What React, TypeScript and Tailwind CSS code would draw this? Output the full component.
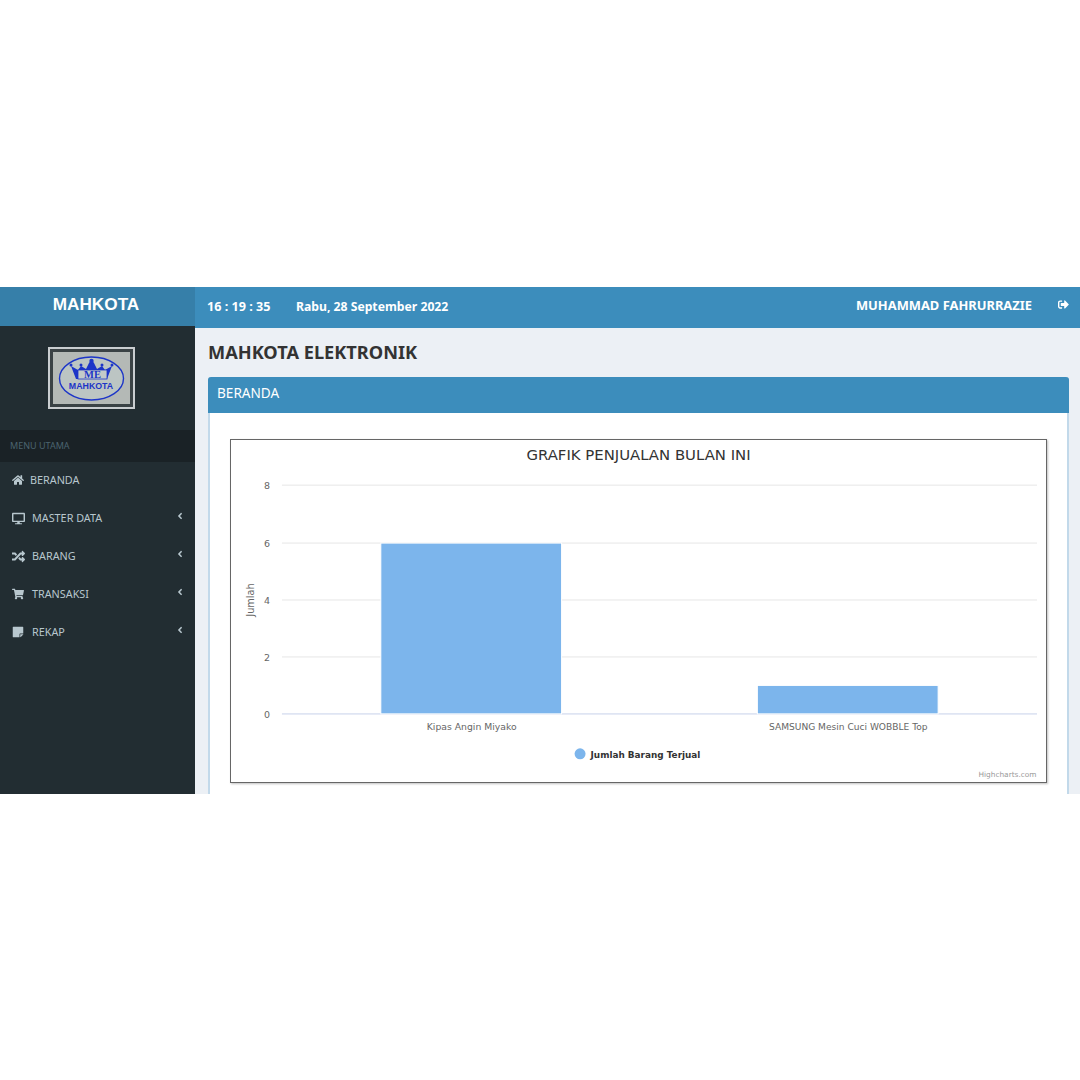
import React from "react";
import { FaHome, FaDesktop, FaRandom, FaShoppingCart, FaStickyNote, FaAngleLeft, FaSignOutAlt } from "react-icons/fa";

const sans = "font-['Noto_Sans','Open_Sans',sans-serif]";

function Logo() {
  return (
    <div className="w-[87px] h-[62px] border-2 border-[#c9cdd0] bg-[#3a4245] p-[3px]">
      <svg viewBox="0 0 77 52" className="w-full h-full block bg-[#b4b9b6]">
        <ellipse cx="38.5" cy="26.5" rx="32" ry="21.5" fill="#bcc5c3" stroke="#1c35c8" strokeWidth="1.4" />
        <path d="M23 27 L18 14 L25 18 L28 14 L33 17 L36 11 L38.5 8 L41 11 L44 17 L49 14 L52 18 L59 14 L54 27 Z" fill="#1c35c8" />
        <circle cx="18" cy="13" r="1.5" fill="#1c35c8" />
        <circle cx="28" cy="13" r="1.5" fill="#1c35c8" />
        <circle cx="49" cy="13" r="1.5" fill="#1c35c8" />
        <circle cx="59" cy="13" r="1.5" fill="#1c35c8" />
        <circle cx="38.5" cy="9" r="2.2" fill="#1c35c8" />
        <rect x="25" y="18" width="29" height="9" fill="#c3cbc9" stroke="#1c35c8" strokeWidth="0.8" />
        <text x="39.5" y="26.3" textAnchor="middle" fontFamily="Liberation Serif, serif" fontWeight="700" fontSize="10.5" fill="#1c35c8">ME</text>
        <text x="38" y="36.5" textAnchor="middle" fontFamily="Liberation Sans, sans-serif" fontWeight="700" fontSize="8.8" fill="#1c35c8">MAHKOTA</text>
      </svg>
    </div>
  );
}

const menu = [
  { label: "MASTER DATA", icon: <FaDesktop className="w-[13px] h-[13px]" /> },
  { label: "BARANG", icon: <FaRandom className="w-[13px] h-[13px]" /> },
  { label: "TRANSAKSI", icon: <FaShoppingCart className="w-[12px] h-[12px]" /> },
  { label: "REKAP", icon: <FaStickyNote className="w-[12px] h-[12px]" /> },
];

function Sidebar() {
  return (
    <aside className="w-[195px] shrink-0 bg-[#222d32] flex flex-col">
      <div className="h-[39px] bg-[#367fa9] flex items-center justify-center text-white text-[17.2px] font-bold font-['Liberation_Sans',sans-serif] pb-[4px] pr-[3px]">
        MAHKOTA
      </div>
      <div className="h-[104px] flex items-start justify-center pt-[21px] pr-[12px]">
        <Logo />
      </div>
      <div className="h-[32px] bg-[#1a2226] flex items-center pl-[10px] text-[9px] text-[#4b646f]">MENU UTAMA</div>
      <div className="h-[38px] flex items-center pl-[12px] gap-[6px] text-[#b8c7ce] text-[10.8px] pb-[2px]">
        <FaHome className="w-[12px] h-[12px]" />
        <span>BERANDA</span>
      </div>
      {menu.map((m) => (
        <div key={m.label} className="h-[38px] flex items-center pl-[12px] pr-[10px] text-[#b8c7ce] text-[10.8px] pb-[2px]">
          <span className="w-[20px] flex">{m.icon}</span>
          <span>{m.label}</span>
          <FaAngleLeft className="ml-auto w-[10px] h-[10px] -mt-[4px]" />
        </div>
      ))}
    </aside>
  );
}

function Chart() {
  const grid = [
    { v: "8", y: 45 },
    { v: "6", y: 103 },
    { v: "4", y: 160 },
    { v: "2", y: 217 },
  ];
  const f = "DejaVu Sans, sans-serif";
  return (
    <svg viewBox="0 0 816 342" className="w-full h-full block">
      <text x="408" y="20" textAnchor="middle" fontFamily={f} fontSize="14.9" fill="#333">GRAFIK PENJUALAN BULAN INI</text>
      {grid.map((g) => (
        <g key={g.v}>
          <line x1="51" x2="807" y1={g.y} y2={g.y} stroke="#e6e6e6" />
          <text x="39" y={g.y + 4} textAnchor="end" fontFamily={f} fontSize="9.5" fill="#666">{g.v}</text>
        </g>
      ))}
      <line x1="51" x2="807" y1="274" y2="274" stroke="#dfe5f3" strokeWidth="2" />
      <text x="39" y="278" textAnchor="end" fontFamily={f} fontSize="9.5" fill="#666">0</text>
      <text transform="translate(23 160) rotate(-90)" textAnchor="middle" fontFamily={f} fontSize="9.8" fill="#666">Jumlah</text>
      <rect x="150" y="103" width="181" height="171" fill="#7cb5ec" stroke="#fff" />
      <rect x="527" y="245.5" width="181" height="28.5" fill="#7cb5ec" stroke="#fff" />
      <text x="241" y="290" textAnchor="middle" fontFamily={f} fontSize="9.3" fill="#666">Kipas Angin Miyako</text>
      <text x="618" y="290" textAnchor="middle" fontFamily={f} fontSize="9.1" fill="#666">SAMSUNG Mesin Cuci WOBBLE Top</text>
      <circle cx="349.5" cy="314" r="5.5" fill="#7cb5ec" />
      <text x="360" y="318.5" fontFamily={f} fontSize="8.9" fontWeight="700" fill="#333">Jumlah Barang Terjual</text>
      <text x="806.5" y="337.5" textAnchor="end" fontFamily={f} fontSize="7.4" fill="#999">Highcharts.com</text>
    </svg>
  );
}

function Main() {
  return (
    <div className="flex-1 min-w-0 flex flex-col bg-[#ecf0f5]">
      <header className="h-[41px] bg-[#3c8dbc] flex items-center text-white font-bold pl-[12px] pr-[11px] pb-[4px]">
        <span className="w-[89px] text-[12.6px] mt-[3px]">16 : 19 : 35</span>
        <span className="text-[12.2px] mt-[3px]">Rabu, 28 September 2022</span>
        <span className="ml-auto mr-[26px] text-[12.9px]">MUHAMMAD FAHRURRAZIE</span>
        <FaSignOutAlt className="w-[11px] h-[11px] -mt-[2px]" />
      </header>
      <div className="px-[13px] pr-[11px] pt-[11px] flex-1 flex flex-col min-h-0">
        <h1 className="text-[18.2px] leading-[26px] font-bold text-[#333] mb-[12px]">MAHKOTA ELEKTRONIK</h1>
        <section className="flex-1 bg-white border-x-2 border-[#c2d9ea] rounded-t-[3px] flex flex-col min-h-0">
          <div className="h-[36px] -mx-[2px] bg-[#3c8dbc] rounded-t-[3px] flex items-center pl-[9px] text-white text-[13.6px] pb-[3px]">
            BERANDA
          </div>
          <div className="pl-[20px] pr-[20px] pt-[26px]">
            <div className="h-[344px] border border-[#666] shadow-[1px_1px_2px_rgba(0,0,0,0.25)] bg-white">
              <Chart />
            </div>
          </div>
        </section>
      </div>
    </div>
  );
}

export default function App() {
  return (
    <div className={`w-[1080px] h-[1080px] bg-white flex flex-col ${sans}`}>
      <div className="h-[287px]" />
      <div className="h-[507px] flex overflow-hidden">
        <Sidebar />
        <Main />
      </div>
    </div>
  );
}
